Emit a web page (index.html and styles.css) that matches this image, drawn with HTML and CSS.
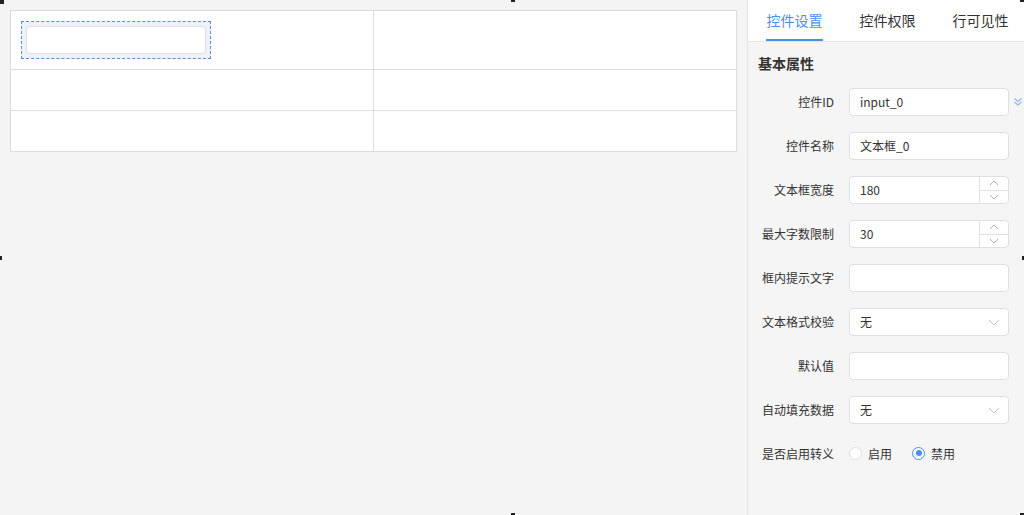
FILE: index.html
```html
<!DOCTYPE html>
<html>
<head>
<meta charset="utf-8">
<link rel="stylesheet" href="styles.css">
</head>
<body>
<div class="app">
  <div class="canvas">
    <table class="grid">
      <tr class="r1">
        <td><div class="widget"><div class="winput"></div></div></td>
        <td></td>
      </tr>
      <tr class="r2"><td></td><td></td></tr>
      <tr class="r3"><td></td><td></td></tr>
    </table>
  </div>
  <div class="panel">
    <div class="tabs">
      <div class="tab active">控件设置</div>
      <div class="tab">控件权限</div>
      <div class="tab">行可见性</div>
    </div>
    <div class="body">
      <div class="section">基本属性</div>
      <div class="row">
        <label>控件ID</label>
        <div class="field">input_0</div>
        <svg class="more" width="10" height="10" viewBox="0 0 10 10"><path d="M1.5 1.5 L5 4.5 L8.5 1.5 M1.5 5 L5 8 L8.5 5" fill="none" stroke="#8fb4e8" stroke-width="1.1"/></svg>
      </div>
      <div class="row">
        <label>控件名称</label>
        <div class="field">文本框_0</div>
      </div>
      <div class="row">
        <label>文本框宽度</label>
        <div class="field num"><span class="val">180</span>
          <div class="spin">
            <div class="sbtn"><svg width="10" height="6" viewBox="0 0 10 6"><path d="M1 5 L5 1 L9 5" fill="none" stroke="#b0b0b0" stroke-width="1"/></svg></div>
            <div class="sbtn"><svg width="10" height="6" viewBox="0 0 10 6"><path d="M1 1 L5 5 L9 1" fill="none" stroke="#b0b0b0" stroke-width="1"/></svg></div>
          </div>
        </div>
      </div>
      <div class="row">
        <label>最大字数限制</label>
        <div class="field num"><span class="val">30</span>
          <div class="spin">
            <div class="sbtn"><svg width="10" height="6" viewBox="0 0 10 6"><path d="M1 5 L5 1 L9 5" fill="none" stroke="#b0b0b0" stroke-width="1"/></svg></div>
            <div class="sbtn"><svg width="10" height="6" viewBox="0 0 10 6"><path d="M1 1 L5 5 L9 1" fill="none" stroke="#b0b0b0" stroke-width="1"/></svg></div>
          </div>
        </div>
      </div>
      <div class="row">
        <label>框内提示文字</label>
        <div class="field"></div>
      </div>
      <div class="row">
        <label>文本格式校验</label>
        <div class="field sel"><span class="val">无</span><svg width="12" height="7" viewBox="0 0 12 7"><path d="M1 1 L6 6 L11 1" fill="none" stroke="#c0c4cc" stroke-width="1"/></svg></div>
      </div>
      <div class="row">
        <label>默认值</label>
        <div class="field"></div>
      </div>
      <div class="row">
        <label>自动填充数据</label>
        <div class="field sel"><span class="val">无</span><svg width="12" height="7" viewBox="0 0 12 7"><path d="M1 1 L6 6 L11 1" fill="none" stroke="#c0c4cc" stroke-width="1"/></svg></div>
      </div>
      <div class="row">
        <label>是否启用转义</label>
        <div class="radios">
          <span class="radio"><span class="dot"></span>启用</span>
          <span class="radio on"><span class="dot"></span>禁用</span>
        </div>
      </div>
    </div>
  </div>
  <span class="h h-tl"></span>
  <span class="h h-tm"></span>
  <span class="h h-tr"></span>
  <span class="h h-ml"></span>
  <span class="h h-mr"></span>
  <span class="h h-bm"></span>
  <span class="h h-br"></span>
</div>
</body>
</html>
```
FILE: styles.css
```css
* { box-sizing: border-box; }
html, body { margin: 0; padding: 0; }
body {
  width: 1024px;
  height: 515px;
  overflow: hidden;
  font-family: "Noto Sans CJK SC", "Noto Sans", sans-serif;
  color: #333;
  font-size: 12px;
}
.app {
  position: relative;
  display: flex;
  width: 1024px;
  height: 515px;
  background: #f4f4f4;
}
.canvas {
  width: 747px;
  padding: 10px;
}
.grid {
  width: 727px;
  border-collapse: collapse;
  background: #fff;
}
.grid td {
  border: 1px solid #dcdcdc;
  width: 50%;
  padding: 0;
  vertical-align: top;
}
.r1 td { height: 59px; }
.r2 td { height: 41px; }
.r3 td { height: 41px; }
.widget {
  margin: 10px 0 0 10px;
  width: 190px;
  height: 38px;
  border: 1px dashed #5b8fd0;
  background: #eef2f8;
  padding: 4px;
}
.winput {
  height: 28px;
  background: #fff;
  border: 1px solid #dcdfe6;
  border-radius: 4px;
}
.panel {
  width: 277px;
  border-left: 1px solid #e4e4e4;
  background: #f5f5f5;
  display: flex;
  flex-direction: column;
}
.tabs {
  height: 42px;
  background: #fff;
  border-bottom: 1px solid #e4e4e4;
  display: flex;
  padding-left: 18px;
  gap: 36px;
}
.tab {
  font-size: 14px;
  line-height: 40px;
  color: #333;
  width: 57px;
  text-align: center;
  border-bottom: 2px solid transparent;
  height: 41px;
}
.tab.active {
  color: #4a8ff0;
  border-bottom-color: #4a8ff0;
}
.body {
  padding: 11px 0 0 10px;
}
.section {
  font-size: 14px;
  font-weight: bold;
  color: #333;
  line-height: 20px;
  margin-bottom: 15px;
}
.row {
  display: flex;
  align-items: center;
  height: 28px;
  margin-bottom: 16px;
  position: relative;
}
.row label {
  width: 76px;
  text-align: right;
  font-size: 12px;
  color: #333;
  margin-right: 15px;
  padding-bottom: 2px;
}
.field {
  width: 160px;
  height: 28px;
  background: #fff;
  border: 1px solid #dcdfe6;
  border-radius: 4px;
  padding: 0 10px 2px;
  display: flex;
  align-items: center;
  font-size: 12px;
  color: #333;
}
.field.num { padding-right: 0; padding-bottom: 0; }
.field.num .val { padding-bottom: 2px; }
.field .val { flex: 1; }
.spin {
  width: 29px;
  height: 26px;
  border-left: 1px solid #dcdfe6;
  display: flex;
  flex-direction: column;
}
.sbtn {
  flex: 1;
  display: flex;
  align-items: center;
  justify-content: center;
}
.sbtn + .sbtn { border-top: 1px solid #dcdfe6; }
.field.sel { padding-right: 8px; }
.field.sel svg { margin-top: 2px; }
.more {
  margin-left: 4px;
}
.radios {
  display: flex;
  align-items: center;
  gap: 20px;
  padding-bottom: 2px;
}
.radio {
  display: flex;
  align-items: center;
  gap: 6px;
  color: #333;
}
.dot {
  width: 13px;
  height: 13px;
  border-radius: 50%;
  border: 1px solid #dcdfe6;
  background: #fff;
  display: inline-block;
  position: relative;
}
.radio.on .dot { border-color: #4a8ff0; }
.radio.on .dot::after {
  content: "";
  position: absolute;
  left: 2.5px;
  top: 2.5px;
  width: 6px;
  height: 6px;
  border-radius: 50%;
  background: #4a8ff0;
}
.h {
  position: absolute;
  width: 4px;
  height: 4px;
  background: #222;
}
.h-tl { left: 0; top: 0; }
.h-tm { left: 511px; top: -2px; }
.h-tr { left: 1020px; top: -2px; }
.h-ml { left: -2px; top: 256px; }
.h-mr { left: 1022px; top: 256px; }
.h-bm { left: 511px; top: 513px; }
.h-br { left: 1020px; top: 513px; }
```
